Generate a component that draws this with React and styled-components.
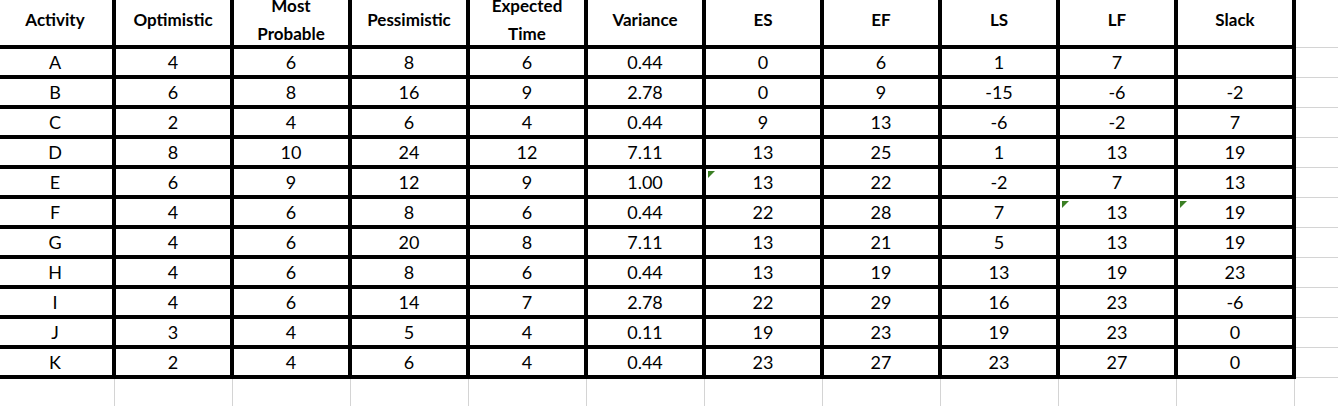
import React from "react";
import styled, { createGlobalStyle } from "styled-components";

const GlobalStyle = createGlobalStyle`
  html, body {
    margin: 0;
    padding: 0;
    background: #ffffff;
    overflow: hidden;
  }
  body {
    font-family: Lato, "Liberation Sans", sans-serif;
    color: #000000;
  }
`;

const COL_WIDTH = 118;
const FILLER_WIDTH = 200;

const Sheet = styled.div`
  width: 1338px;
  height: 406px;
  overflow: hidden;
`;

const Grid = styled.table`
  border-collapse: collapse;
  table-layout: fixed;
  width: ${11 * COL_WIDTH + FILLER_WIDTH}px;
  margin-left: -6px;
  margin-top: -10px;
`;

const Col = styled.col`
  width: ${(props) => props.$width}px;
`;

const HeadCell = styled.th`
  box-sizing: border-box;
  height: 55px;
  padding: 0 2px;
  border: 4px solid #000000;
  font-size: 17px;
  font-weight: 700;
  line-height: 28px;
  text-align: center;
  vertical-align: middle;
  white-space: normal;
`;

// wrapped headings keep Excel's wide line pitch but must not grow the row
const HeadLabel = styled.span`
  display: block;
  margin: -2px 0 -3px;
`;

const Cell = styled.td`
  position: relative;
  box-sizing: border-box;
  height: 30px;
  padding: 0;
  border: 4px solid #000000;
  font-size: 18px;
  line-height: 24px;
  text-align: center;
  vertical-align: middle;
`;

// green "number stored as text" corner that Excel draws on some cells
const Flag = styled.span`
  position: absolute;
  z-index: 1;
  top: 2px;
  left: 2px;
  width: 0;
  height: 0;
  border-top: 7px solid #3b7f24;
  border-right: 7px solid transparent;
`;

const BlankCell = styled.td`
  box-sizing: border-box;
  height: ${(props) => props.$height}px;
  padding: 0;
  border: 1px solid #d4d4d4;
`;

const HEADERS = [
  "Activity",
  "Optimistic",
  "Most Probable",
  "Pessimistic",
  "Expected Time",
  "Variance",
  "ES",
  "EF",
  "LS",
  "LF",
  "Slack",
];

// values per activity, flags mark cells carrying the green error corner
const ROWS = [
  { cells: ["A", 4, 6, 8, 6, "0.44", 0, 6, 1, 7, ""] },
  { cells: ["B", 6, 8, 16, 9, "2.78", 0, 9, -15, -6, -2] },
  { cells: ["C", 2, 4, 6, 4, "0.44", 9, 13, -6, -2, 7] },
  { cells: ["D", 8, 10, 24, 12, "7.11", 13, 25, 1, 13, 19] },
  { cells: ["E", 6, 9, 12, 9, "1.00", 13, 22, -2, 7, 13], flags: [6] },
  { cells: ["F", 4, 6, 8, 6, "0.44", 22, 28, 7, 13, 19], flags: [9, 10] },
  { cells: ["G", 4, 6, 20, 8, "7.11", 13, 21, 5, 13, 19] },
  { cells: ["H", 4, 6, 8, 6, "0.44", 13, 19, 13, 19, 23] },
  { cells: ["I", 4, 6, 14, 7, "2.78", 22, 29, 16, 23, -6] },
  { cells: ["J", 3, 4, 5, 4, "0.11", 19, 23, 19, 23, 0] },
  { cells: ["K", 2, 4, 6, 4, "0.44", 23, 27, 23, 27, 0] },
];

function App() {
  return (
    <Sheet>
      <GlobalStyle />
      <Grid>
        <colgroup>
          {HEADERS.map((h) => (
            <Col key={h} $width={COL_WIDTH} />
          ))}
          <Col $width={FILLER_WIDTH} />
        </colgroup>
        <thead>
          <tr>
            {HEADERS.map((h) => (
              <HeadCell key={h}>
                <HeadLabel>{h}</HeadLabel>
              </HeadCell>
            ))}
            <BlankCell $height={55} />
          </tr>
        </thead>
        <tbody>
          {ROWS.map((row) => (
            <tr key={row.cells[0]}>
              {row.cells.map((value, i) => (
                <Cell key={i}>
                  {row.flags && row.flags.includes(i) && <Flag />}
                  {value}
                </Cell>
              ))}
              <BlankCell $height={30} />
            </tr>
          ))}
          <tr>
            {HEADERS.map((h) => (
              <BlankCell key={h} $height={30} />
            ))}
            <BlankCell $height={30} />
          </tr>
        </tbody>
      </Grid>
    </Sheet>
  );
}

export default App;
